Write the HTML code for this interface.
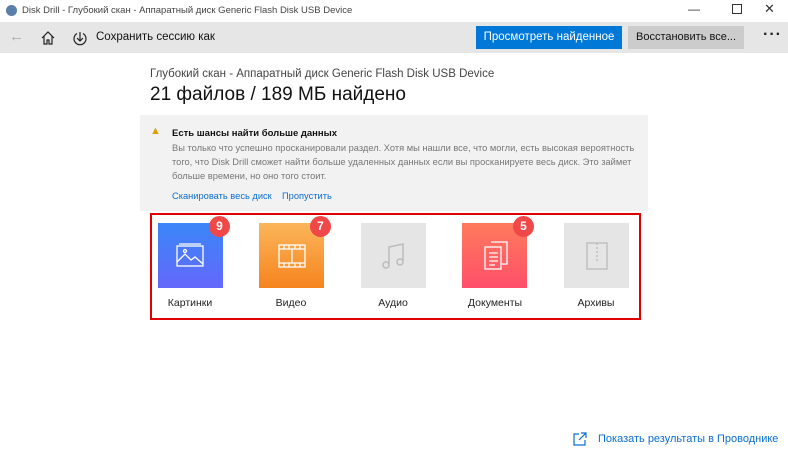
<!DOCTYPE html><html><head><meta charset="utf-8"><style>
body{margin:0;width:788px;height:458px;background:#fff;font-family:"Liberation Sans",sans-serif;position:relative;overflow:hidden;color:#000}
.a{position:absolute}
.tile{position:absolute;top:223px;width:65px;height:65px}
.lbl{position:absolute;top:297px;width:100px;text-align:center;font-size:10.5px;color:#222}
.badge{position:absolute;width:21px;height:21px;border-radius:50%;background:#f04848;color:#fff;font-size:12px;font-weight:bold;text-align:center;line-height:21px;top:216px}
</style></head><body>
<div class="a" style="left:6px;top:5px;width:11px;height:11px;border-radius:50%;background:#5a7fa8"></div>
<div class="a" style="left:22px;top:5px;font-size:9.5px;color:#444">Disk Drill - Глубокий скан - Аппаратный диск Generic Flash Disk USB Device</div>
<div class="a" style="left:688px;top:2px;font-size:12px;color:#333">—</div>
<div class="a" style="left:732px;top:4px;width:8px;height:8px;border:1px solid #333"></div>
<div class="a" style="left:764px;top:1px;font-size:13px;color:#333">✕</div>
<div class="a" style="left:0;top:22px;width:788px;height:31px;background:#e6e6e6"></div>
<div class="a" style="left:9px;top:28px;font-size:15px;color:#aaa">←</div>
<svg class="a" style="left:40px;top:30px" width="16" height="16" viewBox="0 0 16 16" fill="none" stroke="#222" stroke-width="1.2"><path d="M2 8L8 2l6 6M4 6.5V14h3v-4h2v4h3V6.5"/></svg>
<svg class="a" style="left:72px;top:30px" width="16" height="16" viewBox="0 0 16 16" fill="none" stroke="#222" stroke-width="1.2"><path d="M5 3.5a6 6 0 1 0 6 0M8 2v9M5 8l3 3 3-3"/></svg>
<div class="a" style="left:96px;top:31px;font-size:11.5px;color:#111">Сохранить сессию как</div>
<div class="a" style="left:476px;top:26px;width:146px;height:23px;background:#0078d7;color:#fff;font-size:11.5px;text-align:center;line-height:23px">Просмотреть найденное</div>
<div class="a" style="left:628px;top:26px;width:116px;height:23px;background:#ccc;color:#111;font-size:11px;text-align:center;line-height:23px">Восстановить все...</div>
<div class="a" style="left:763px;top:26px;font-size:16px;font-weight:bold;letter-spacing:1px;color:#222">···</div>
<div class="a" style="left:150px;top:68px;font-size:11.5px;color:#444">Глубокий скан - Аппаратный диск Generic Flash Disk USB Device</div>
<div class="a" style="left:150px;top:84px;font-size:19px;color:#111">21 файлов / 189 МБ найдено</div>
<div class="a" style="left:140px;top:115px;width:508px;height:96px;background:#f2f2f2"></div>
<div class="a" style="left:150px;top:125px;font-size:11px;color:#e0a000">▲</div>
<div class="a" style="left:172px;top:128px;font-size:9.5px;font-weight:bold;color:#111">Есть шансы найти больше данных</div>
<div class="a" style="left:172px;top:141px;width:470px;font-size:9.3px;line-height:14px;color:#777">Вы только что успешно просканировали раздел. Хотя мы нашли все, что могли, есть высокая вероятность того, что Disk Drill сможет найти больше удаленных данных если вы просканируете весь диск. Это займет больше времени, но оно того стоит.</div>
<div class="a" style="left:172px;top:191px;font-size:9.3px;color:#0a6ed1">Сканировать весь диск</div>
<div class="a" style="left:282px;top:191px;font-size:9.3px;color:#0a6ed1">Пропустить</div>
<div class="a" style="left:150px;top:213px;width:487px;height:103px;border:2px solid #e00000"></div>
<div class="tile" style="left:158px;background:linear-gradient(#3a86f8,#6468fb)"></div>
<svg class="a" style="left:176px;top:242px" width="28" height="28" viewBox="0 0 28 28" fill="none" stroke="#fff" stroke-width="1.3"><rect x="1" y="4" width="26" height="20"/><path d="M3 2h22M1 20l8-8 6 6 4-3 8 7"/><circle cx="9" cy="9" r="1.5"/></svg>
<div class="tile" style="left:259px;background:linear-gradient(#fbb55a,#f6841e)"></div>
<svg class="a" style="left:278px;top:244px" width="28" height="24" viewBox="0 0 28 24" fill="none" stroke="#fff" stroke-width="1.3"><rect x="1" y="1" width="26" height="22"/><path d="M1 5h26M1 19h26M14 5v14M6 1v4M11 1v4M17 1v4M22 1v4M6 19v4M11 19v4M17 19v4M22 19v4"/></svg>
<div class="tile" style="left:361px;background:#e5e5e5"></div>
<svg class="a" style="left:382px;top:242px" width="24" height="28" viewBox="0 0 24 28" fill="none" stroke="#bbb" stroke-width="1.5"><path d="M7 22V5l14-3v17"/><circle cx="4" cy="23" r="3"/><circle cx="18" cy="20" r="3"/></svg>
<div class="tile" style="left:462px;background:linear-gradient(#ff7a5c,#ff4f6a)"></div>
<svg class="a" style="left:482px;top:241px" width="28" height="30" viewBox="0 0 28 30" fill="none" stroke="#fff" stroke-width="1.3"><path d="M9 1h16v22h-5"/><rect x="3" y="6" width="16" height="22"/><path d="M7 12h9M7 16h9M7 20h9M7 24h6"/></svg>
<div class="tile" style="left:564px;background:#e5e5e5"></div>
<svg class="a" style="left:585px;top:242px" width="24" height="28" viewBox="0 0 24 28" fill="none" stroke="#bbb" stroke-width="1.3"><rect x="2" y="1" width="20" height="26"/><path d="M12 1v20" stroke-dasharray="2 2"/></svg>
<div class="badge" style="left:209px">9</div>
<div class="badge" style="left:310px">7</div>
<div class="badge" style="left:513px">5</div>
<div class="lbl" style="left:140px">Картинки</div>
<div class="lbl" style="left:241px">Видео</div>
<div class="lbl" style="left:343px">Аудио</div>
<div class="lbl" style="left:445px">Документы</div>
<div class="lbl" style="left:546px">Архивы</div>
<svg class="a" style="left:573px;top:432px" width="14" height="14" viewBox="0 0 14 14" fill="none" stroke="#0a6ed1" stroke-width="1.2"><path d="M6 2H1v11h11V8M8 1h5v5M13 1L6 8"/></svg>
<div class="a" style="left:598px;top:433px;font-size:11px;color:#0a6ed1">Показать результаты в Проводнике</div>
</body></html>
